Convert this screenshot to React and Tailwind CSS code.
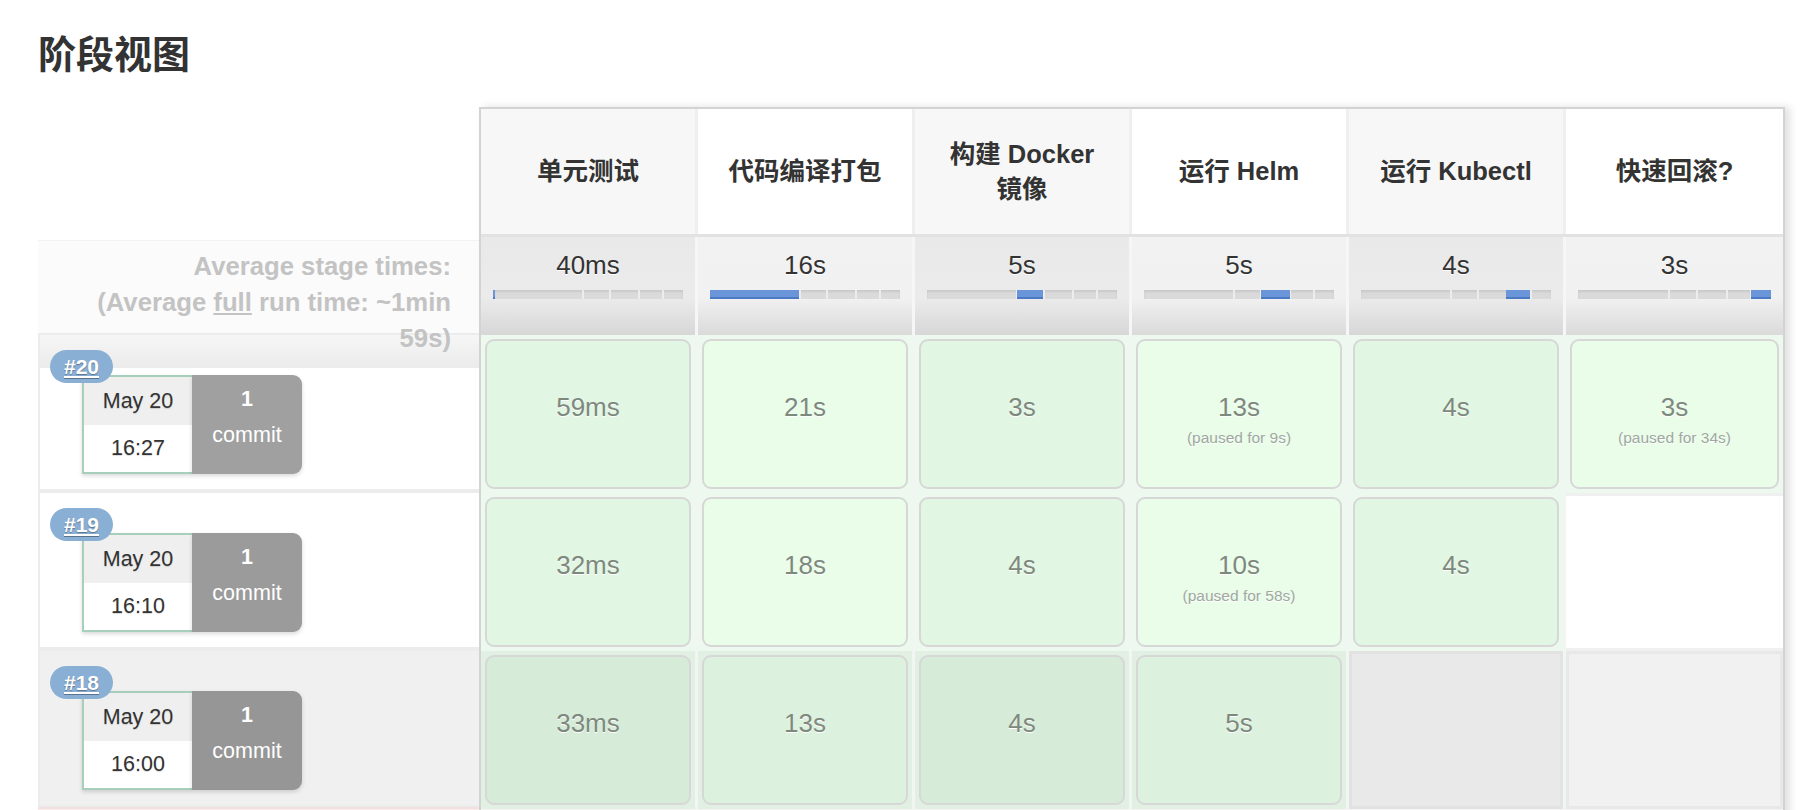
import React from 'react';

const stages = [
  { name: ['单元测试'], avg: '40ms', from: 0, to: 0.012 },
  { name: ['代码编译打包'], avg: '16s', from: 0, to: 0.468 },
  { name: ['构建 Docker', '镜像'], avg: '5s', from: 0.474, to: 0.61 },
  { name: ['运行 Helm'], avg: '5s', from: 0.618, to: 0.768 },
  { name: ['运行 Kubectl'], avg: '4s', from: 0.765, to: 0.887 },
  { name: ['快速回滚?'], avg: '3s', from: 0.895, to: 1 },
];

const ticks = [0.468, 0.61, 0.765, 0.89];

const runs = [
  {
    id: '#20',
    time: '16:27',
    commitBg: 'bg-[#a0a0a0]',
    cells: [['59ms'], ['21s'], ['3s'], ['13s', '(paused for 9s)'], ['4s'], ['3s', '(paused for 34s)']],
  },
  {
    id: '#19',
    time: '16:10',
    commitBg: 'bg-[#9b9b9b]',
    cells: [['32ms'], ['18s'], ['4s'], ['10s', '(paused for 58s)'], ['4s'], null],
  },
  {
    id: '#18',
    time: '16:00',
    commitBg: 'bg-[#969696]',
    gray: true,
    cells: [['33ms'], ['13s'], ['4s'], ['5s'], null, null],
  },
];

const StageBar = ({ from, to }) => (
  <div className="relative mx-[12px] h-[9px] bg-[#dadada] shadow-[inset_0_2px_2px_rgba(0,0,0,0.08)]">
    {ticks.map((t) => (
      <span
        key={t}
        className="absolute top-0 h-full w-[2px] bg-[#ececec]"
        style={{ left: `${t * 100}%` }}
      />
    ))}
    <span
      className="absolute top-0 h-full bg-[#6a96d9] border-b-2 border-[#4c79c4]"
      style={{ left: `${from * 100}%`, width: `${(to - from) * 100}%` }}
    />
  </div>
);

const BuildCell = ({ run }) => (
  <div
    className={`relative h-[158px] pt-[40px] pl-[42px] border-y-2 border-l-2 border-[#ececec] ${
      run.gray ? 'bg-[#f0f0f0]' : 'bg-white'
    }`}
  >
    <a className="absolute left-[10px] top-[15px] z-10 h-[33px] w-[63px] rounded-full bg-[#8aafd5] flex items-center justify-center text-[21px] font-bold text-white underline [text-shadow:0_1px_1px_rgba(0,0,0,0.35)]">
      {run.id}
    </a>
    <div className="flex">
      <div className="w-[110px] h-[99px] border-2 border-r-0 border-[#a8cfbc] flex flex-col shadow-[0_2px_4px_rgba(0,0,0,0.15)] text-[21.5px] text-[#333] [text-shadow:0_1px_1px_rgba(0,0,0,0.15)]">
        <div className="flex-1 bg-[#efefef] flex items-center justify-center">May 20</div>
        <div className="flex-1 bg-white flex items-center justify-center">{run.time}</div>
      </div>
      <div
        className={`w-[110px] h-[99px] pt-[6px] rounded-r-[9px] ${run.commitBg} flex flex-col items-center text-white text-[21.5px] leading-[36px] shadow-[0_2px_4px_rgba(0,0,0,0.15)]`}
      >
        <span className="font-bold">1</span>
        <span>commit</span>
      </div>
    </div>
  </div>
);

const StageCell = ({ value, col, gray }) => {
  const odd = col % 2 === 0;
  if (!value) {
    if (gray) {
      return (
        <div
          className={`h-full border-[3px] ${
            odd ? 'bg-[#e9e9e9] border-[#e2e2e2]' : 'bg-[#f1f1f1] border-[#e8e8e8]'
          }`}
        />
      );
    }
    return <div className="h-full bg-white border-y-[3px] border-[#f0f0f0]" />;
  }
  const box = gray
    ? odd
      ? 'bg-[#d6ebd8]'
      : 'bg-[#ddf1df]'
    : odd
    ? 'bg-[#e1f6e3]'
    : 'bg-[#e9fde9]';
  return (
    <div className={`h-full p-[4px] ${gray ? 'bg-[#e2f0e3]' : 'bg-[#edf8ee]'}`}>
      <div
        className={`h-full pt-[49px] rounded-[9px] border-2 border-[#d7d7d7] ${box} flex flex-col items-center [text-shadow:0_1px_0_#fff]`}
      >
        <span className="text-[26px] text-[#7e897e] leading-[34px]">{value[0]}</span>
        {value[1] && (
          <span className="text-[15.5px] text-[#a0a8a0] leading-[22px] mt-[3px]">{value[1]}</span>
        )}
      </div>
    </div>
  );
};

export default function App() {
  return (
    <div className="min-h-[810px] bg-white pl-[38px] pr-[20px] font-['Liberation_Sans','Noto_Sans_CJK_SC',sans-serif] text-[#333] overflow-hidden">
      <h2 className="pt-[32px] text-[38px] leading-[46px] font-bold text-[#333]">阶段视图</h2>

      <div className="mt-[29px] flex">
        {/* left column: summary + builds */}
        <div className="w-[441px] shrink-0">
          <div className="h-[133px]" />
          <div className="relative z-20 h-[93px] bg-[#fbfbfb] border-t border-[#f2f2f2]">
            <div className="absolute right-[28px] top-[7px] text-right text-[25.7px] font-bold leading-[36px] text-[#c3c3c3] whitespace-nowrap">
              <div>Average stage times:</div>
              <div>
                (Average <span className="underline">full</span> run time: ~1min
              </div>
              <div>59s)</div>
            </div>
          </div>
          <div className="relative">
            <div className="absolute left-[2px] right-0 top-[2px] z-[1] h-[33px] bg-[linear-gradient(to_bottom,#f6f6f6,#ebebeb)]" />
            {runs.map((run) => (
              <BuildCell key={run.id} run={run} />
            ))}
            <div className="h-[20px] border-t-2 border-[#f0e0e0] bg-[#fdecec]" />
          </div>
        </div>

        {/* stage table */}
        <div className="w-[1306px] shrink-0 border-x-2 border-t-2 border-[#d3d3d3] shadow-[5px_0_8px_rgba(0,0,0,0.12)]">
          <div className="grid grid-cols-6 h-[125px]">
            {stages.map((s, i) => (
              <div
                key={i}
                className={`flex flex-col items-center justify-center border-r-[3px] border-[#efefef] last:border-r-0 text-[25.5px] font-bold leading-[35px] text-[#333] ${
                  i % 2 === 0 ? 'bg-[#f7f7f7]' : 'bg-white'
                }`}
              >
                {s.name.map((line) => (
                  <span key={line}>{line}</span>
                ))}
              </div>
            ))}
          </div>

          <div className="grid grid-cols-6 h-[101px] border-t-[3px] border-[#e2e2e2]">
            {stages.map((s, i) => (
              <div
                key={i}
                className={`pt-[13px] border-r-[3px] border-[#f6f6f6] last:border-r-0 ${
                  i % 2 === 0
                    ? 'bg-[linear-gradient(to_bottom,#e9e9e9_0%,#ebebeb_62%,#d7d7d7_100%)]'
                    : 'bg-[linear-gradient(to_bottom,#f2f2f2_0%,#f1f1f1_62%,#dadada_100%)]'
                }`}
              >
                <div className="text-center text-[26px] leading-[30px] text-[#333] [text-shadow:0_1px_0_#fff]">
                  {s.avg}
                </div>
                <div className="mt-[10px]">
                  <StageBar from={s.from} to={s.to} />
                </div>
              </div>
            ))}
          </div>

          {runs.map((run) => (
            <div key={run.id} className="grid grid-cols-6 h-[158px]">
              {run.cells.map((c, i) => (
                <div key={i} className="border-r-[3px] border-[#f2f6f2] last:border-r-0">
                  <StageCell value={c} col={i} gray={run.gray} />
                </div>
              ))}
            </div>
          ))}
          <div className="h-[20px] bg-[#f4f4f4]" />
        </div>
      </div>
    </div>
  );
}
